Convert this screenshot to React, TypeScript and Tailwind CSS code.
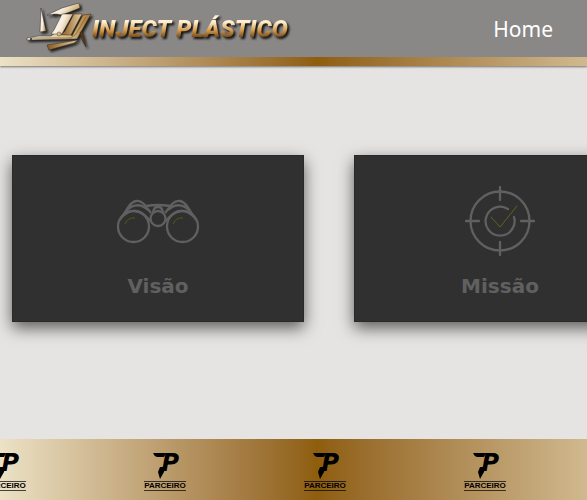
import type { ReactNode } from "react";

function LogoMark() {
  return (
    <svg viewBox="0 0 66 57" className="h-[57px] w-[66px] shrink-0 drop-shadow-[2px_2px_1px_#222]" aria-hidden="true">
      <defs>
        <linearGradient id="metal" x1="0" y1="0" x2="1" y2="0.4">
          <stop offset="0" stopColor="#ffffff" />
          <stop offset="0.6" stopColor="#f6ecdb" />
          <stop offset="1" stopColor="#c9a46c" />
        </linearGradient>
        <linearGradient id="bronze" x1="0" y1="0" x2="1" y2="0">
          <stop offset="0" stopColor="#8a5a22" />
          <stop offset="1" stopColor="#e8cfa0" />
        </linearGradient>
        <linearGradient id="base" x1="0" y1="0" x2="1" y2="0">
          <stop offset="0" stopColor="#f4efe6" />
          <stop offset="0.6" stopColor="#dcc49a" />
          <stop offset="1" stopColor="#a87632" />
        </linearGradient>
      </defs>
      <g stroke="#30291f" strokeWidth="0.5">
        <path d="M15 8 20 31 14 32Z" fill="url(#metal)" />
        <path d="M21 15 36 8 53 3 54 8 36 15 30 14Z" fill="url(#metal)" />
        <path d="M21 45 52 40 48 43 23 50Z" fill="url(#bronze)" />
        <path d="M57 15 65 14 51 39 1 40V38L12 36H25L29 33H44L46 36Z" fill="url(#base)" />
        <path d="M36 14H47L36 34H25L28 30Z" fill="url(#metal)" />
        <path d="M48 14H56L45 35H35L39 31Z" fill="url(#bronze)" />
        <path d="M54 32H56L60 47 56 40Z" fill="#5a3c17" />
      </g>
      <path d="M5 38H45L50 34 60 17" stroke="#8a632e" strokeWidth="0.8" fill="none" />
      <circle cx="33" cy="34" r="2" fill="#cbb58f" stroke="#775a31" strokeWidth="0.6" />
      <circle cx="5" cy="39" r="1" fill="#30291f" />
      <circle cx="28" cy="15" r="1" fill="#30291f" />
    </svg>
  );
}

function Binoculars() {
  return (
    <svg viewBox="0 0 84 46" className="h-[46px] w-[84px]" fill="none" stroke="#606060" strokeWidth="2.300" aria-hidden="true">
      <circle cx="17.500" cy="28.500" r="15.500" />
      <circle cx="66.500" cy="28.500" r="15.500" />
      <circle cx="42" cy="20.500" r="7.500" />
      <path d="M4 22 13 8Q20-1 28 6L35 15M10 13Q21 2 32 12M6 19Q20 5 34 23M80 22 71 8Q64-1 56 6L49 15M74 13Q63 2 52 12M78 19Q64 5 50 23M30 8Q42 6 54 8M37 16Q37 9 42 9T47 16" />
      <path d="M9 26Q12 19 19 20M57 26Q60 19 67 20" stroke="#5b551d" strokeWidth="1" />
    </svg>
  );
}

function Target() {
  return (
    <svg viewBox="0 0 70 70" className="size-[70px]" fill="none" stroke="#606060" strokeWidth="2.300" strokeLinecap="round" aria-hidden="true">
      <circle cx="35" cy="35" r="29.500" />
      <path d="M35 1V14M35 56V69M1 35H14M56 35H69M43 23A14.500 14.500 0 1 0 49 31" />
      <path d="M26 31 35 41 52 20" stroke="#6a6019" strokeWidth="1" />
    </svg>
  );
}

function Card({ title, children }: { title: string; children: ReactNode }) {
  return (
    <article className="flex h-[167px] w-[292px] shrink-0 flex-col items-center border border-[#292929] bg-[#303030] pt-[30px] shadow-[0_6px_15px_0_rgba(0,0,0,0.6)]">
      <div className="flex h-[70px] items-center">{children}</div>
      <h2 className="mt-4 font-['DejaVu_Sans',sans-serif] text-xl leading-7 font-bold text-[#606060]">{title}</h2>
    </article>
  );
}

function Partner() {
  return (
    <li className="flex w-40 shrink-0 flex-col items-center pt-3 text-black">
      <div className="relative flex h-[30px] w-7 justify-end">
        <svg viewBox="0 0 28 30" className="absolute inset-0" aria-hidden="true">
          <path d="M2 2H15L13 6H6Q3 5 2 2ZM9 16H14L13 21 9 28 7 21Z" />
        </svg>
        <span className="font-['DejaVu_Sans',sans-serif] text-2xl leading-6 font-bold italic">P</span>
      </div>
      <span className="border-y border-black/70 font-['Liberation_Sans',Arial,sans-serif] text-[8px] leading-2 font-bold">PARCEIRO</span>
    </li>
  );
}

export default function App() {
  return (
    <div className="flex min-h-screen flex-col overflow-hidden bg-[#e5e4e2]">
      <header className="relative shadow-[0_1px_2px_rgba(0,0,0,0.5)]">
        <div className="flex h-[57px] items-center justify-between bg-[#8a8886] pr-[34px] pl-[26px]">
          <a href="#" className="flex items-center">
            <LogoMark />
            <span className="drop-shadow-[2px_2px_1px_#111]">
              <span className="bg-linear-to-b from-[#fff0cf] from-25% via-[#d49a48] via-55% to-[#754719] to-80% bg-clip-text pr-1 font-['Roboto',sans-serif] text-2xl font-black whitespace-nowrap text-transparent italic">INJECT PLÁSTICO</span>
            </span>
          </a>
          <nav>
            <a href="#" className="font-['Noto_Sans',sans-serif] text-[21px] leading-8 text-white">Home</a>
          </nav>
        </div>
        <div className="h-[9px] bg-linear-to-r from-[#ece2c6] via-[#8e5e0c] via-54% to-[#d0b98f]" />
      </header>
      <main className="flex gap-[50px] px-3 pt-[89px] pb-[117px]">
        <Card title="Visão"><Binoculars /></Card>
        <Card title="Missão"><Target /></Card>
      </main>
      <footer className="h-[61px] bg-linear-to-r from-[#ece2c6] via-[#8e5e0c] via-54% to-[#d0b98f]">
        <ul className="-ml-[75px] flex">
          <Partner />
          <Partner />
          <Partner />
          <Partner />
        </ul>
      </footer>
    </div>
  );
}
